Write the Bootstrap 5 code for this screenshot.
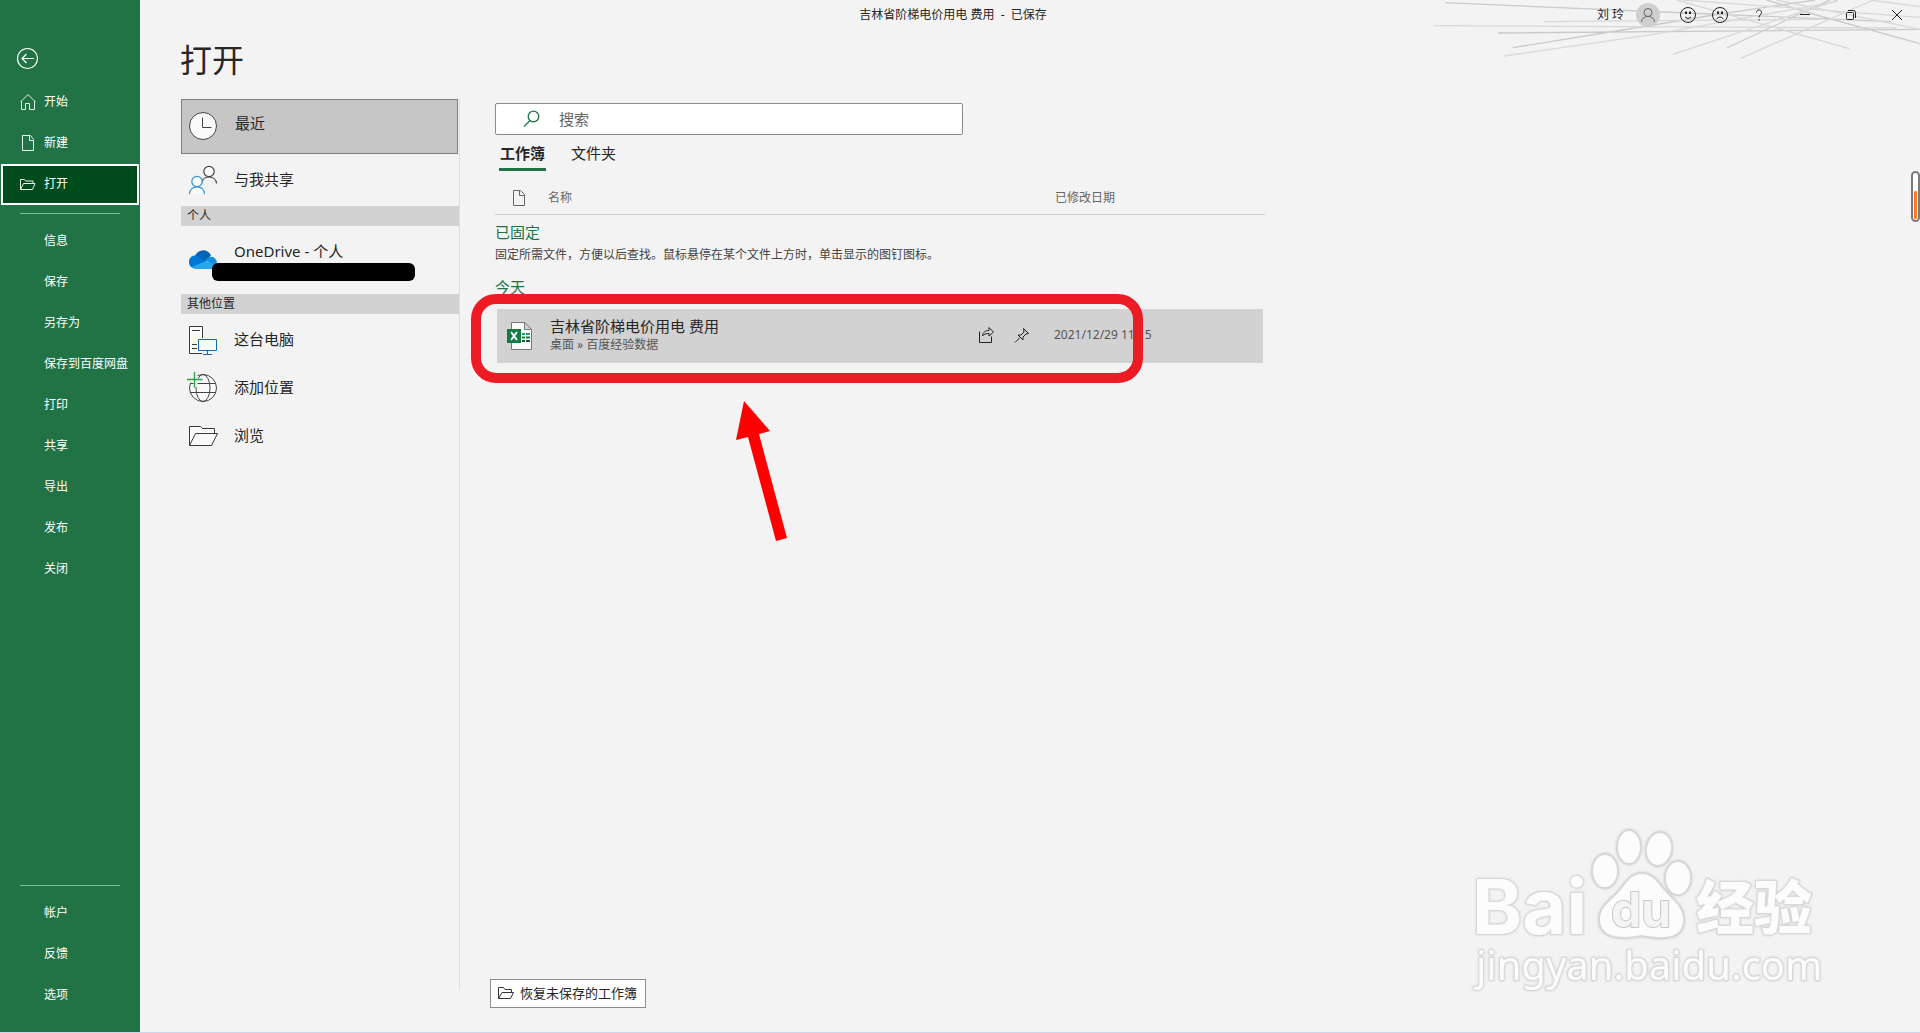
<!DOCTYPE html>
<html lang="zh-CN">
<head>
<meta charset="utf-8">
<meta name="viewport" content="width=device-width, initial-scale=1">
<title>打开</title>
<link href="https://cdn.jsdelivr.net/npm/bootstrap@5.3.0/dist/css/bootstrap.min.css" rel="stylesheet">
<script src="https://cdn.jsdelivr.net/npm/bootstrap@5.3.0/dist/js/bootstrap.bundle.min.js" defer></script>
<style>
body{font-family:"Noto Sans","Noto Sans CJK SC",sans-serif;font-size:12px;line-height:18px;color:#262626;background:#f3f3f3}
.app{min-height:100vh;border-bottom:1px solid #ccd8ea}
svg{display:block;flex:none;fill:none}
.side{width:140px;background:#217346;padding:43px 0 16px}
.side .back{margin:0 0 8px 12px;width:31px;height:31px;display:grid;place-items:center}
.side .nav-link{height:41px;padding:0 0 2px 16px;display:flex;align-items:center;gap:4px;color:#fff;font-size:12px;white-space:nowrap}
.side .nav-link svg{width:24px;height:24px;stroke:#e8f0eb}
.side .nav-link.plain{padding-left:44px}
.side .nav-link.active{background:#004b1c;border:2px solid #fff;margin:0 1px;padding-left:13px}
.side hr{margin:8px 20px 7px;border-color:#8fd0a8;opacity:.8}
.top{height:30px;position:relative}
.top .who{width:323px}
.top .file-name{padding-left:169px}
.rays{position:absolute;top:0;right:0}
.user{width:39px}
.ctl{border:0;background:none;padding:0;height:30px;width:46px;display:grid;place-items:center;color:#262626}
.ctl.face{width:32px}
.avatar{width:24px;height:24px;border-radius:50%;background:#cfcfcf;display:grid;place-items:center;margin-right:12px}
.stage{padding:6px 16px 0 41px}
.title{font-size:32px;line-height:48px;font-weight:400;margin:0 0 15px -1px}
.places{width:279px;border-right:1px solid #dedede;margin-bottom:42px}
.place{border:0;background:none;width:100%;display:flex;align-items:center;text-align:left;padding:0 0 0 6px;gap:15px;font-size:15px;line-height:22px;color:#262626;height:48px}
.place span{padding-bottom:2px}
.place.current{height:55px;width:277px;border:1px solid #7f7f7f;background:#c6c6c6;padding:0 0 2px 5px;gap:16px}
.place.current span{padding-bottom:6px}
.place.tall{height:52px}
.place.drive{height:68px;padding-bottom:2px}
.place.drive span{padding-bottom:16px}
.sect{background:#d2d2d2;height:20px;line-height:20px;padding-left:6px;font-size:12px;font-weight:400;margin:0}
.places .wide{padding-top:2px}
.redact{position:absolute;left:31px;top:37px;width:203px;height:18px;border-radius:6px;background:#000}
.pane{width:770px;margin:4px 0 24px 35px}
.search{width:468px;height:32px;background:#fff;border:1px solid #8c8c8c;border-radius:2px;padding-left:27px;gap:18px}
.search input{border:0;outline:0;background:none;font-size:15px;line-height:22px;padding:0}
.search input::placeholder{color:#666;opacity:1}
.tabs{gap:24px;padding-left:4px;margin-top:4px}
.tabs button{border:0;border-bottom:3px solid transparent;background:none;font-size:15px;line-height:24px;height:32px;padding:0 1px 2px;color:#262626}
.tabs button.on{font-weight:700;border-color:#217346}
.heads{height:44px;border-bottom:1px solid #cdcdcd;color:#666;padding:10px 0 0 17px}
.heads .c-name{padding-left:22px}
.c-date{width:210px}
.grp{font-size:15px;line-height:22px;color:#217346;margin:6px 0 0;font-weight:400}
.hint{color:#444;margin:3px 0 12px}
.doc{height:54px;background:#d2d2d2;margin:11px 2px 0;padding-left:9px}
.doc .about{padding-left:17px;margin-top:-3px}
.doc .name{font-size:15px;line-height:20px;color:#262626;text-decoration:none;display:block}
.doc .path{color:#555;line-height:17px}
.doc .c-date{width:209px;color:#555;margin-top:-2px}
.act{border:0;background:none;padding:0 0 2px;width:36px}
.act+.act{width:40px}
.recover{height:29px;width:156px;border:1px solid #8c8c8c;background:#fff;font-size:13px;line-height:18px;padding:0 0 2px 6px;gap:5px;color:#262626;margin:0 0 0 -5px;white-space:nowrap}
.ring{position:absolute;left:471px;top:294px;width:672px;height:89px;border:10px solid #ed1c24;border-radius:25px;pointer-events:none}
.arrow{position:absolute;left:730px;top:395px}
.gauge{position:absolute;right:0;top:171px;width:9px;height:51px;border:2px solid #7b7b7b;border-radius:5px;background:#fff;padding:18px 1px 1px}
.gauge div{background:#ff7a22;height:100%;border-radius:1px}
.mark-art{position:absolute;right:70px;bottom:13px;pointer-events:none;stroke:#d8d8d8;stroke-width:2px;fill:#fcfcfc;filter:drop-shadow(0 0 1px #ccc)}
.mark-art text{paint-order:stroke;stroke-linejoin:round}
.mark-art .brand{font:700 76px Inter,sans-serif}
.mark-art .inner{font:700 48px Inter,sans-serif;fill:#f4f4f4;stroke:#c8c8c8}
.mark-art .cjk{font:900 58px "Noto Sans CJK SC",sans-serif}
.mark-art .site{font:400 40px "Noto Sans",sans-serif}
</style>
</head>
<body>
<div class="app d-flex position-relative overflow-hidden">
<nav class="side d-flex flex-column flex-shrink-0">
<a class="back" href="#" aria-label="返回"><svg width="23" height="23" stroke="#fff" stroke-width="1.200"><circle cx="11.500" cy="11.500" r="10"/><path d="M18 11.500H6M10.500 7 6 11.500 10.500 16"/></svg></a>
<a class="nav-link" href="#"><svg><path d="M4.500 12 12 4.500 19.500 12M5.500 11v8.500h4v-6h4v6h5V11"/></svg>开始</a>
<a class="nav-link" href="#"><svg><path d="M6.500 4.500h8l3 4v11h-11zM13.500 4.500v5h4"/></svg>新建</a>
<a class="nav-link active" href="#"><svg><path d="M4.500 17.500v-10h4l1 1.500h7.500v2.500M4.500 17.500l3-6h11.500l-2.500 6z"/></svg>打开</a>
<hr>
<a class="nav-link plain" href="#">信息</a>
<a class="nav-link plain" href="#">保存</a>
<a class="nav-link plain" href="#">另存为</a>
<a class="nav-link plain" href="#">保存到百度网盘</a>
<a class="nav-link plain" href="#">打印</a>
<a class="nav-link plain" href="#">共享</a>
<a class="nav-link plain" href="#">导出</a>
<a class="nav-link plain" href="#">发布</a>
<a class="nav-link plain" href="#">关闭</a>
<hr class="mt-auto">
<a class="nav-link plain" href="#">帐户</a>
<a class="nav-link plain" href="#">反馈</a>
<a class="nav-link plain" href="#">选项</a>
</nav>
<div class="flex-fill d-flex flex-column">
<header class="top d-flex align-items-center">
<svg class="rays" width="500" height="62" viewBox="0 0 1500 186" stroke="#cacaca" stroke-width="4"><path d="M75 8 870 42 1415 65M235 99 1500 88M278 143 700 75 900 42 1185 0M1040 0 1200 48 1500 131M920 144 1100 60 1230 0"/><path stroke="#d8d8d8" d="M43 77 1430 84M372 65 1200 58M253 168 700 103 1250 5M758 163 1255 0M962 175 1360 0M770 0 1288 146M790 0 1500 52M1070 0 1500 88M1350 0 1500 20"/></svg>
<div class="file-name flex-fill text-center">吉林省阶梯电价用电 费用&nbsp; -&nbsp; 已保存</div>
<div class="who d-flex align-items-center position-relative">
<span class="user">刘 玲</span>
<button class="avatar border-0 p-0" aria-label="帐户"><svg width="16" height="16" stroke="#666"><circle cx="8" cy="5.500" r="4"/><path d="M1.500 15c0-7.500 13-7.500 13 0"/></svg></button>
<button class="ctl face" aria-label="笑脸"><svg width="18" height="18" stroke="#222"><circle cx="9" cy="9" r="7.500"/><path d="M6 11q3 3 6 0"/><path stroke-width="2" d="M7 5.500v2.500M11 5.500v2.500"/></svg></button>
<button class="ctl face" aria-label="哭脸"><svg width="18" height="18" stroke="#222"><circle cx="9" cy="9" r="7.500"/><path d="M5.500 13q3.500-4 7 0"/><path stroke-width="2" d="M7 5.500v2.500M11 5.500v2.500"/></svg></button>
<button class="ctl" aria-label="帮助"><svg width="8" height="12" stroke="#222"><path d="M1.500 3.500C1.500 0 6.500 0 6.500 3.500c0 2-2.500 2.500-2.500 5M4 10v1.500"/></svg></button>
<button class="ctl" aria-label="最小化"><svg width="10" height="10" stroke="#222"><path d="M0 4.500h10"/></svg></button>
<button class="ctl" aria-label="还原"><svg width="12" height="12" stroke="#222"><rect x="1.500" y="3.500" width="7" height="7" rx="1"/><path d="M3 1.500h5.500q2 0 2 2V9"/></svg></button>
<button class="ctl" aria-label="关闭"><svg width="12" height="12" stroke="#222"><path d="m1 1 10 10M11 1 1 11"/></svg></button>
</div>
</header>
<main class="stage flex-fill d-flex flex-column">
<h1 class="title">打开</h1>
<div class="d-flex flex-fill">
<div class="places flex-shrink-0">
<button class="place current"><svg width="32" height="32" stroke="#444"><circle cx="16" cy="16" r="13.500" fill="#fafafa"/><path d="M15.500 7.500v10h9"/></svg><span>最近</span></button>
<button class="place tall"><svg width="32" height="32" stroke="#444" stroke-width="1.200"><circle cx="22" cy="7.500" r="5.200" fill="#fafafa"/><path d="M15 18.500c1-7.500 14-7.500 14.500 1"/><g stroke="#2f93d6"><circle cx="10" cy="17.500" r="5.200" fill="#fafafa"/><path fill="#fafafa" d="M2.500 30c0-9.500 15-9.500 15 0"/></g></svg><span>与我共享</span></button>
<h2 class="sect">个人</h2>
<div class="position-relative">
<button class="place drive"><svg width="32" height="32"><path fill="#0364b8" d="M8 13c3-7 12-8 16-1l-4 6-11 2z"/><path fill="#0078d4" d="M2 19c0-6 6-8 10-5l8 5-14 6c-3-1-4-3-4-6z"/><path fill="#1490df" d="M18 17c5-5 10-4 12 2l-1 5z"/><path fill="#28a8ea" d="m5 24 14-6 11 5c0 2-2 3-4 3H8c-1 0-2-1-3-2z"/></svg><span>OneDrive - 个人</span></button>
<div class="redact"></div>
</div>
<h2 class="sect">其他位置</h2>
<div class="wide">
<button class="place"><svg width="32" height="32" stroke="#3b3b3b"><path fill="#fafafa" d="M15 29.500H2.500v-27h13V14"/><path d="M5 6.500h8M5 20.500h5M5 24.500h5"/><g stroke="#0f6cbd"><path fill="#fafafa" d="M11.500 15.500h18v11h-18z"/><path d="M20.500 26.500v3.500M16 30.500h9"/></g></svg><span>这台电脑</span></button>
<button class="place"><svg width="32" height="32" stroke="#444"><circle cx="16" cy="16" r="13.500" fill="#fafafa"/><ellipse cx="16" cy="16" rx="7" ry="13.500"/><path d="M4 11.500h24.500M3 20.500h26"/><path stroke="#f3f3f3" stroke-width="4" d="M0 8.500h13M8.500 0v15"/><path stroke="#2da14a" stroke-width="1.300" d="M0 7.500h15.500M7.500 0v15.500"/></svg><span>添加位置</span></button>
<button class="place"><svg width="32" height="32" stroke="#3b3b3b"><path fill="#fafafa" d="M2.500 26V6.500h11l2 2h12V14L24.500 25.500h-22"/><path fill="#fafafa" d="m2.500 25.500 6-12h22l-6 12z"/></svg><span>浏览</span></button>
</div>
</div>
<section class="pane d-flex flex-column">
<label class="search d-flex align-items-center"><svg width="18" height="18" stroke="#217346" stroke-width="1.300"><circle cx="10.500" cy="6.500" r="5.300"/><path d="M7 10.500 1 16.500"/></svg><input class="flex-fill" type="search" placeholder="搜索" aria-label="搜索"></label>
<div class="tabs d-flex"><button class="on">工作簿</button><button>文件夹</button></div>
<div class="heads d-flex align-items-center"><svg width="14" height="18" stroke="#666"><path d="M1.500 1.500h7l4 4v11h-11zM7.500 1.500v5h5"/></svg><span class="c-name flex-fill">名称</span><span class="c-date">已修改日期</span></div>
<h2 class="grp">已固定</h2>
<p class="hint">固定所需文件，方便以后查找。鼠标悬停在某个文件上方时，单击显示的图钉图标。</p>
<h2 class="grp mt-0">今天</h2>
<div class="doc d-flex align-items-center">
<svg width="27" height="30"><path fill="#fafafa" stroke="#777" d="M5.500 1.500h13.500l6.500 7v20h-20zM18.500 1.500v7h7"/><rect x="1" y="8" width="14" height="14" fill="#107c41"/><path stroke="#fff" stroke-width="2" d="m5 11 6 8M11 11l-6 8"/><path stroke="#21a366" stroke-width="2" d="M16 13h3M20 13h4"/><path stroke="#107c41" stroke-width="2" d="M16 16.500h3M20 16.500h4"/><path stroke="#185c37" stroke-width="2" d="M16 20h3M20 20h4"/></svg>
<div class="about flex-fill"><a class="name" href="#">吉林省阶梯电价用电 费用</a><div class="path">桌面 » 百度经验数据</div></div>
<button class="act" aria-label="共享"><svg width="18" height="18" stroke="#222"><path d="M1.500 5.500v11h12v-6"/><path d="M4.500 10c.5-4 3-5.500 6.500-5.500v-3L15.500 6 11 10V7.500c-3 0-5 .5-6.500 2.500z"/></svg></button>
<button class="act" aria-label="固定"><svg width="18" height="18" stroke="#222"><path d="m9.500 2.500 5 5-2.500.500-3 3v3L4 9h3l3-3zM6 11.500 1 16.500"/></svg></button>
<span class="c-date">2021/12/29 11:15</span>
</div>
<button class="recover mt-auto d-flex align-items-center"><svg width="18" height="16" stroke="#333"><path d="M1.500 13.500v-11h5l1.500 2h6.500v3M1.500 13.500l3.500-6h11.500l-3 6z"/></svg>恢复未保存的工作簿</button>
</section>
</div>
</main>
</div>
<div class="gauge"><div></div></div>
<svg class="mark-art" width="380" height="190">
<text class="brand" x="2" y="105">Bai</text>
<ellipse cx="135" cy="42" rx="13" ry="17"/><ellipse cx="159" cy="18" rx="12" ry="17"/><ellipse cx="189" cy="20" rx="13" ry="17" transform="rotate(10 189 20)"/><ellipse cx="208" cy="49" rx="13" ry="17"/>
<path d="M172 44c10 0 16 8 22 16 8 10 20 16 20 31 0 18-16 21-42 16-26 5-43 1-43-17 0-14 14-20 22-31 6-8 11-15 21-15z"/>
<text class="inner" x="141" y="98">du</text>
<text class="cjk" x="226" y="100">经验</text>
<text class="site" x="6" y="151">jingyan.baidu.com</text>
</svg>
<div class="ring"></div>
<svg class="arrow" width="60" height="150"><path fill="#f00" d="m14 6 26 30-11 3 28 104-11 3L18 42 6 45z"/></svg>
</div>
</body>
</html>
